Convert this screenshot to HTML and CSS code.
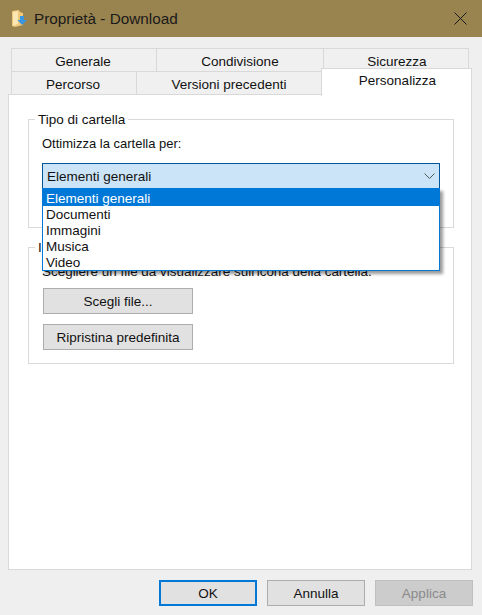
FILE: index.html
```html
<!DOCTYPE html>
<html lang="it">
<head>
    <meta charset="UTF-8">
    <title>Proprietà - Download</title>
    <link rel="stylesheet" href="styles.css">
</head>
<body>
    <div class="window">
        <div class="titlebar">
            <svg class="folder-icon" width="18" height="18" viewBox="0 0 18 18">
                <path d="M2 1 L9 0 L10 2 L13 3 L13 15 L5 17 L2 16 Z" fill="#f0c878"/>
                <path d="M3 2 L8 1 L8 14 L3 16 Z" fill="#fbe6b4"/>
                <path d="M10 6 H14 V10 H17 L12 15 L7.5 10 H10 Z" fill="#3a96e0"/>
            </svg>
            <span class="title">Proprietà - Download</span>
            <svg class="close-icon" width="13" height="13" viewBox="0 0 13 13">
                <path d="M0.5 0.5 L12.5 12.5 M12.5 0.5 L0.5 12.5" stroke="#1a1a1a" stroke-width="1" fill="none"/>
            </svg>
        </div>
        <div class="content">
            <div class="tabs">
                <div class="tab-row tab-row-top">
                    <div class="tab tab-generale">Generale</div>
                    <div class="tab tab-condivisione">Condivisione</div>
                    <div class="tab tab-sicurezza">Sicurezza</div>
                </div>
                <div class="tab-row tab-row-bottom">
                    <div class="tab tab-percorso">Percorso</div>
                    <div class="tab tab-versioni">Versioni precedenti</div>
                    <div class="tab tab-active">Personalizza</div>
                </div>
            </div>
            <div class="panel">
                <fieldset class="group group-type">
                    <legend>Tipo di cartella</legend>
                    <p class="label">Ottimizza la cartella per:</p>
                    <div class="combo">
                        <div class="combo-box">
                            <span>Elementi generali</span>
                            <svg width="11" height="6" viewBox="0 0 11 6">
                                <path d="M0.5 0.5 L5.5 5.5 L10.5 0.5" stroke="#4d5a55" fill="none"/>
                            </svg>
                        </div>
                        <ul class="combo-list">
                            <li class="selected">Elementi generali</li>
                            <li>Documenti</li>
                            <li>Immagini</li>
                            <li>Musica</li>
                            <li>Video</li>
                        </ul>
                    </div>
                </fieldset>
                <fieldset class="group group-icon">
                    <legend>Icone cartella</legend>
                    <p class="label">Scegliere un file da visualizzare sull'icona della cartella.</p>
                    <button class="btn btn-wide">Scegli file...</button>
                    <button class="btn btn-wide">Ripristina predefinita</button>
                </fieldset>
            </div>
            <div class="footer">
                <button class="btn btn-footer btn-default">OK</button>
                <button class="btn btn-footer">Annulla</button>
                <button class="btn btn-footer btn-disabled">Applica</button>
            </div>
        </div>
    </div>
</body>
</html>
```

FILE: styles.css
```css
body {
    margin: 0;
    padding: 0;
    font-family: 'Liberation Sans', Arial, sans-serif;
    font-size: 13.5px;
    color: #111;
    background: #efefef;
}
.window {
    width: 482px;
    height: 615px;
    display: flex;
    flex-direction: column;
    overflow: hidden;
}
.titlebar {
    height: 37px;
    flex: none;
    display: flex;
    align-items: center;
    padding: 0 15px 0 10px;
    background: #99834f;
}
.folder-icon {
    flex: none;
    margin-right: 6px;
}
.title {
    flex: 1;
    font-size: 15.3px;
    color: #1a1a1a;
}
.content {
    flex: 1;
    display: flex;
    flex-direction: column;
    padding: 11px 10px 0 8px;
}
.tabs {
    padding-left: 3px;
}
.tab-row {
    display: flex;
    height: 23px;
}
.tab {
    box-sizing: border-box;
    display: flex;
    align-items: center;
    justify-content: center;
    height: 24px;
    border: 1px solid #d9d9d9;
    border-right: none;
    background: #f0f0f0;
}
.tab-row-top .tab {
    padding-top: 2px;
}
.tab-row-bottom .tab {
    padding-top: 2px;
}
.tab-generale { width: 145px; padding-right: 2px; }
.tab-condivisione { width: 167px; }
.tab-sicurezza { width: 146px; border-right: 1px solid #d9d9d9; padding-left: 2px; }
.tab-percorso { width: 125px; padding-right: 2px; }
.tab-versioni { width: 185px; }
.tab-row-bottom .tab-active {
    position: relative;
    z-index: 2;
    box-sizing: border-box;
    width: 151px;
    height: 28px;
    margin-top: -3px;
    padding: 0 0 4px 2px;
    background: #fff;
    border-right: 1px solid #d9d9d9;
    border-bottom: none;
}
.panel {
    position: relative;
    box-sizing: border-box;
    height: 476px;
    padding: 16px 17px 0 19px;
    background: #fff;
    border: 1px solid #d9d9d9;
}
.group {
    margin: 0;
    padding: 0 0 0 13px;
    border: 1px solid #d9d9d9;
}
.group legend {
    padding: 0 3px;
    margin-left: -7px;
}
.group-type {
    height: 116px;
    box-sizing: border-box;
    margin-top: 1px;
    margin-bottom: 12px;
}
.group-icon {
    height: 124px;
    box-sizing: border-box;
}
.label {
    margin: 0;
    font-size: 13px;
    line-height: 16px;
}
.group-type .label {
    margin-top: 9px;
}
.group-icon .label {
    margin-top: 9px;
    font-size: 13.45px;
}
.combo {
    position: relative;
    width: 398px;
    margin-top: 11px;
}
.combo-box {
    box-sizing: border-box;
    height: 26px;
    display: flex;
    align-items: center;
    justify-content: space-between;
    padding: 0 4px 0 4px;
    background: #cce4f7;
    border: 1px solid #00569c;
}
.combo-list {
    position: absolute;
    top: 25px;
    left: 0;
    z-index: 5;
    box-sizing: border-box;
    width: 398px;
    margin: 0;
    padding: 0;
    list-style: none;
    background: #fff;
    border: 1px solid #0078d7;
    box-shadow: 3px 3px 3px rgba(0, 0, 0, 0.4);
}
.combo-list li {
    height: 16px;
    line-height: 17px;
    padding-left: 3px;
}
.combo-list .selected {
    height: 17px;
    line-height: 19px;
    background: #0078d7;
    color: #fff;
}
.btn {
    display: block;
    box-sizing: border-box;
    font-family: inherit;
    font-size: 13.5px;
    color: #111;
    background: #e1e1e1;
    border: 1px solid #adadad;
    padding: 0;
}
.btn-wide {
    width: 150px;
    height: 26px;
    margin: 0 0 10px 1px;
}
.group-icon .label + .btn {
    margin-top: 8px;
}
.footer {
    display: flex;
    justify-content: flex-end;
    gap: 10px;
    margin-top: 10px;
    margin-right: -1px;
}
.btn-footer {
    width: 98px;
    height: 26px;
}
.btn-default {
    border: 2px solid #0078d7;
}
.btn-disabled {
    background: #ccc;
    border-color: #bfbfbf;
    color: #8a8a8a;
}
```
